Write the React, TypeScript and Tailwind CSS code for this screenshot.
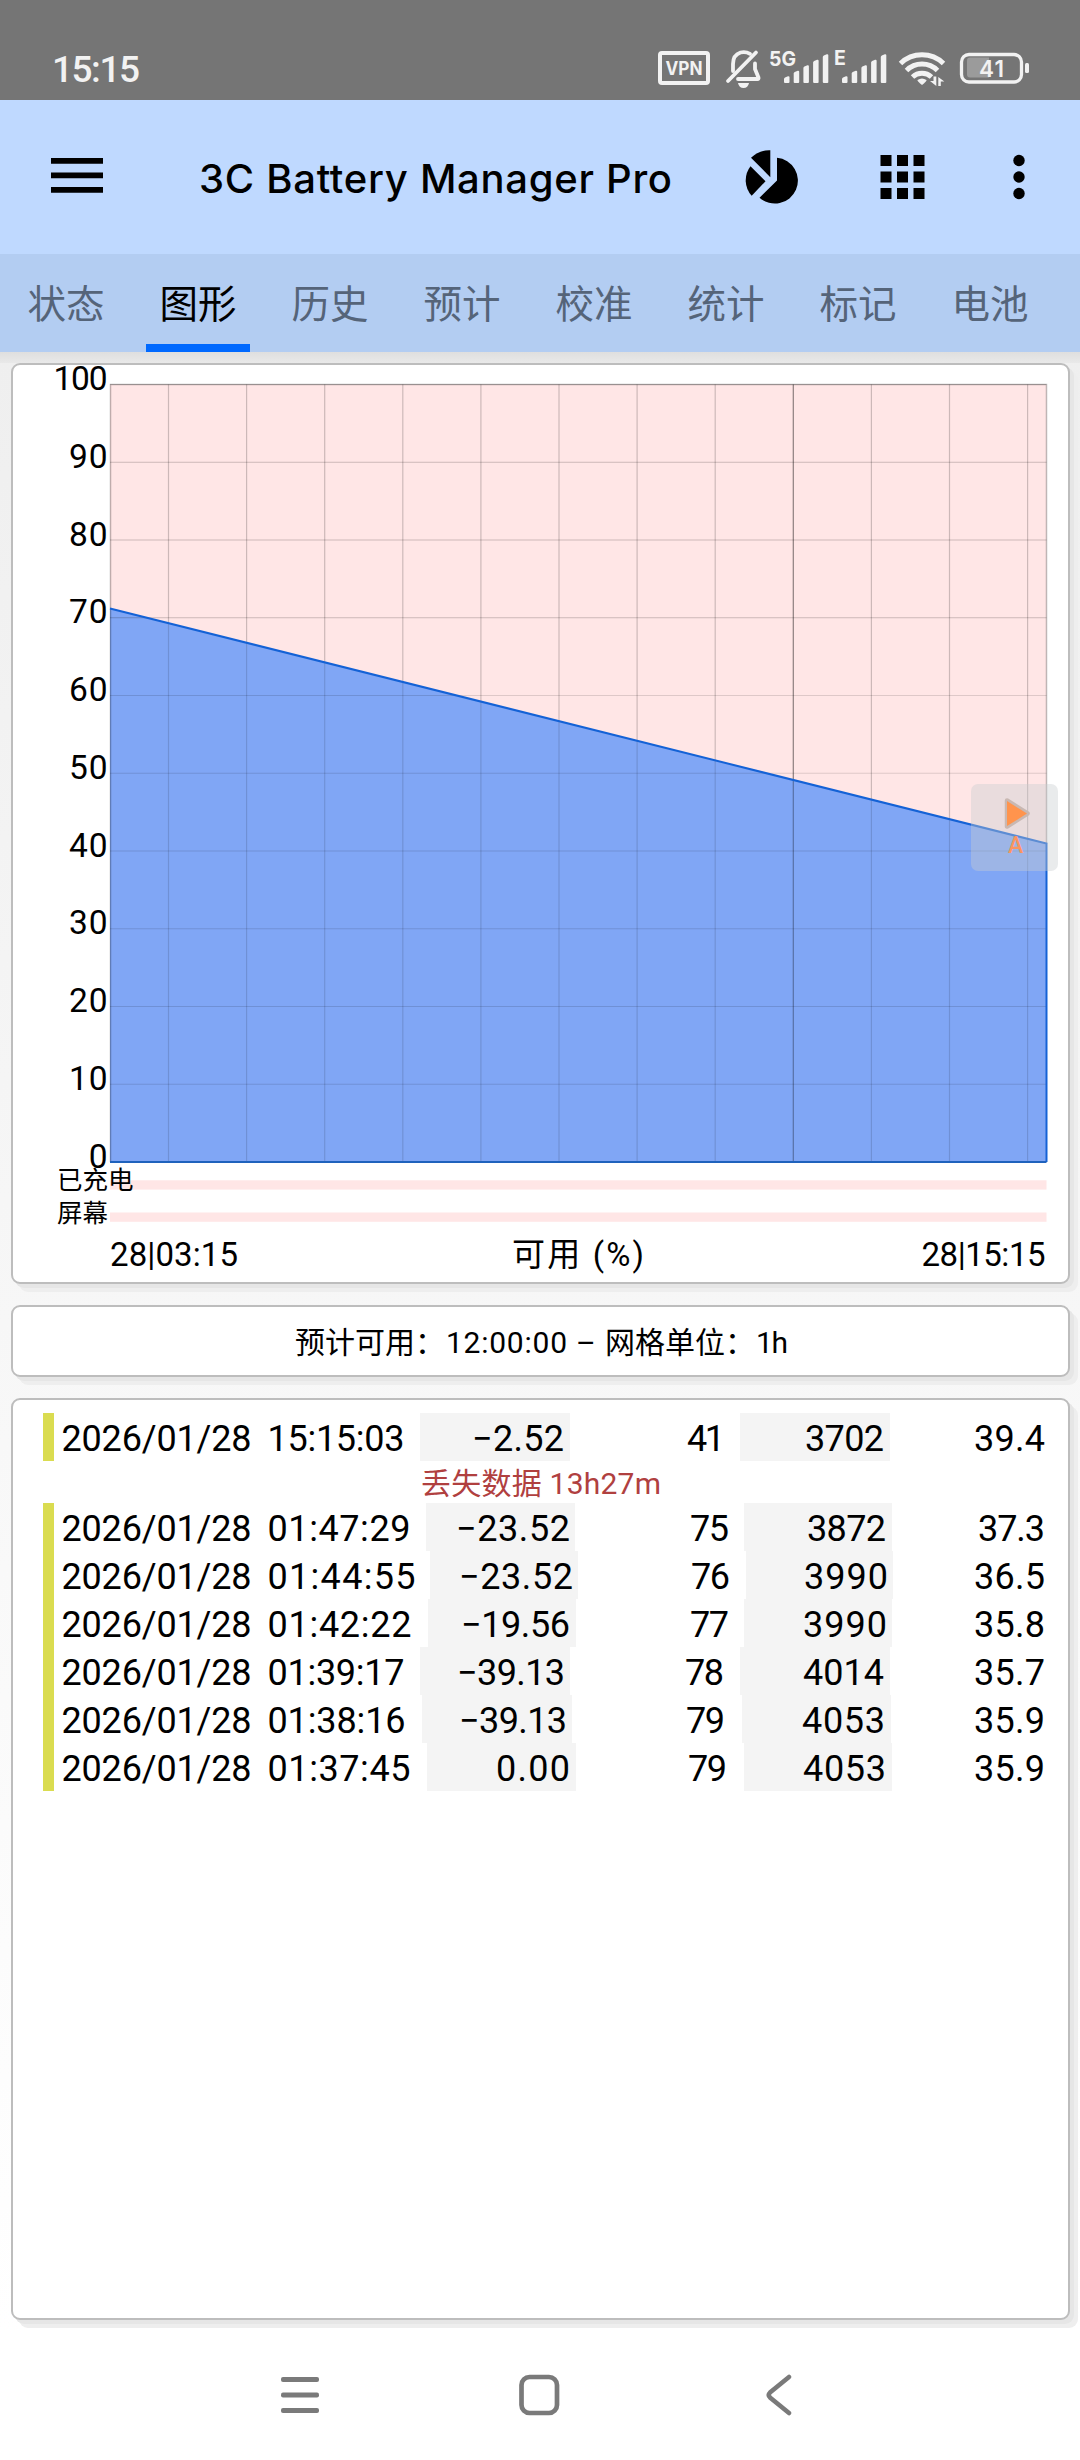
import { useLayoutEffect, useRef, type ReactNode } from "react";

const FONT = "font-[Roboto,'Noto_Sans_CJK_SC',sans-serif]";

/* Text whose tracking is spread so that it takes exactly `w` pixels. */
function Fit({ w, children, className = "" }: { w: number; children: string; className?: string }) {
  const ref = useRef<HTMLSpanElement>(null);
  useLayoutEffect(() => {
    const el = ref.current;
    if (!el) return;
    const apply = () => {
      el.style.letterSpacing = "0px";
      const natural = el.getBoundingClientRect().width;
      const gap = (w - natural) / (children.length - 1 || 1);
      el.style.letterSpacing = `${gap}px`;
      el.style.marginRight = `${-gap}px`;
    };
    apply();
    document.fonts?.ready.then(apply);
  }, [w, children]);
  return (
    <span ref={ref} className={`inline-block whitespace-pre ${className}`}>
      {children}
    </span>
  );
}

function Signal({ x }: { x: number }) {
  return (
    <g fill="#f2f2f2">
      {[0, 1, 2, 3, 4].map((i) => {
        const top = [76, 70.5, 65, 59.5, 54][i];
        const bx = x + i * 9.7;
        return <path key={i} d={`M${bx} ${top + 3}q0-1 1-1.500l3-1.300q1.500-.3 1.500 1V82q0 1-1 1h-3.500q-1 0-1-1z`} />;
      })}
    </g>
  );
}

function StatusBar() {
  return (
    <header className="flex h-[100px] items-end justify-between bg-[#757575] pl-[52px] pr-[50px] text-[#f2f2f2]">
      <div className="h-[40px] text-[37px] font-medium leading-[40px] mb-[10px]">
        <Fit w={88}>15:15</Fit>
      </div>
      <svg className="h-[60px] w-[374px]" viewBox="656 40 374 60" fontFamily="Inter, sans-serif">
        <rect x="660" y="53" width="48" height="30" rx="2" fill="none" stroke="#f2f2f2" strokeWidth="4" />
        <text x="665.500" y="75" fontSize="19" fontWeight="700" fill="#f2f2f2" textLength="37" lengthAdjust="spacingAndGlyphs">VPN</text>
        <g fill="none" stroke="#f2f2f2" strokeWidth="3.800" strokeLinecap="round">
          <path d="M728 81L756 52.500" />
          <path d="M733 71V64q0-9 7.500-11.500q5-1.300 9.500 1.300" />
          <path d="M755 63.500V69l3.500 8.500q.3 1.500-1 1.500H738" />
        </g>
        <path d="M738 83h11q-1 5-5.500 5t-5.500-5z" fill="#f2f2f2" />
        <text x="769" y="66" fontSize="20" fontWeight="700" fill="#f2f2f2" textLength="27" lengthAdjust="spacingAndGlyphs">5G</text>
        <Signal x={784} />
        <text x="834" y="65" fontSize="19.500" fontWeight="700" fill="#f2f2f2">E</text>
        <Signal x={842} />
        <g fill="none" stroke="#f2f2f2" strokeWidth="5">
          <path d="M900.500 63.500a31 31 0 0 1 43 0" />
          <path d="M906.500 70.500a22 22 0 0 1 31 0" />
          <path d="M912.500 77a14 14 0 0 1 19 0" />
        </g>
        <path d="M917.500 80q4.500-3 9 0q.5 1-4.500 5q-5-4-4.500-5z" fill="#f2f2f2" />
        <path d="M930 81h3.500v-4.500h2.800V86zM938.300 77l6 4.500h-3.500V86h-2.500z" fill="#f2f2f2" />
        <rect x="961.500" y="54.500" width="60" height="27.500" rx="7.500" fill="none" stroke="#f2f2f2" strokeWidth="3.300" />
        <path d="M967 60.500q0-3 3-3h19v20h-19q-3 0-3-3z" fill="#9b9b9b" />
        <text x="979" y="77" fontSize="22.500" fontWeight="600" fill="#f2f2f2" textLength="25">41</text>
        <rect x="1025" y="63" width="4" height="10" rx="1.500" fill="#f2f2f2" />
      </svg>
    </header>
  );
}

function AppBar() {
  return (
    <div className="flex h-[154px] items-start bg-[#bfd9ff] text-black">
      <svg className="mt-[58px] ml-[51px] h-[35px] w-[52px]" viewBox="0 0 52 35">
        <path d="M0 0h52v5.700H0zM0 14.500h52v5.700H0zM0 29h52v5.700H0z" />
      </svg>
      <h1 className="ml-[96px] mt-[51px] w-[544px] text-[40px] font-medium leading-[56px] font-[Inter,sans-serif]">
        <Fit w={473}>3C Battery Manager Pro</Fit>
      </h1>
      <svg className="mt-[50px] h-[54px] w-[55px]" viewBox="743.500 150 55 54">
        <path d="M777.500 157.700a23 23 0 1 1-17.500 40l17.500-17.200z" />
        <path d="M770.800 150.200v27l-19.300-19.500q8.500-8 19.300-7.500z" />
        <path d="M751 166.200l15 15-13.800 14.500a23 23 0 0 1-1.200-29.500z" />
      </svg>
      <svg className="ml-[82px] mt-[55px] h-[44px] w-[45px]" viewBox="0 0 45 44">
        {[0, 16.500, 33].map((y) =>
          [0.5, 17, 33.500].map((x) => <rect key={`${x}-${y}`} x={x} y={y} width="11" height="11" />),
        )}
      </svg>
      <svg className="ml-[87.500px] mt-[54px] h-[46px] w-[12px]" viewBox="0 0 12 46">
        <circle cx="6" cy="6.500" r="5.700" />
        <circle cx="6" cy="23" r="5.700" />
        <circle cx="6" cy="39.500" r="5.700" />
      </svg>
    </div>
  );
}

const TABS = ["状态", "图形", "历史", "预计", "校准", "统计", "标记", "电池"];

function Tabs() {
  return (
    <nav className="flex h-[98px] bg-[#b3cdf2]">
      {TABS.map((t, i) => (
        <div key={t} className={`flex w-[132px] flex-col items-center ${i === 1 ? "text-black" : "text-[#556479]"}`}>
          <span className="h-[90px] text-[38.500px] leading-[101px]">{t}</span>
          {i === 1 && <span className="h-2 w-[104px] bg-[#0069ff]" />}
        </div>
      ))}
    </nav>
  );
}

function Card({ children, className = "" }: { children: ReactNode; className?: string }) {
  return (
    <section
      className={`ml-[11px] w-[1059px] shrink-0 rounded-[9px] border-2 border-[#bdbdbd] bg-white shadow-[4px_4px_0_#e6e6e6,8px_8px_0_#eeeeee] ${className}`}
    >
      {children}
    </section>
  );
}

const LEFT = 110;
const RIGHT = 1046.5;
const TOP = 384.5;
const BOTTOM = 1162;

function Chart() {
  const rows = Array.from({ length: 11 }, (_, i) => TOP + (i * (BOTTOM - TOP)) / 10);
  const cols = Array.from({ length: 12 }, (_, i) => 168.5 + i * 78.1);
  return (
    <svg className="block h-[917px] w-[1055px] overflow-visible" viewBox="13 365 1055 917" fontFamily="Roboto, 'Noto Sans CJK SC', sans-serif">
      <rect x={LEFT} y={TOP} width={RIGHT - LEFT} height={BOTTOM - TOP} fill="#ffe6e6" />
      <path d={`M${LEFT} 608.500L${RIGHT} 843.500V${BOTTOM}H${LEFT}z`} fill="#80a6f5" />
      <g stroke="#000" strokeOpacity=".2" strokeWidth="1.200">
        {rows.slice(0, 10).map((y) => (
          <path key={y} d={`M${LEFT} ${y}H${RIGHT}`} strokeOpacity={y > 620 ? 0.13 : 0.2} />
        ))}
        {cols.map((x, i) => (
          <g key={x}>
            <path d={`M${x} ${TOP}V${608.5 + (x - LEFT) * 0.251}`} strokeOpacity={i === 8 ? 0.45 : 0.2} />
            <path d={`M${x} ${608.5 + (x - LEFT) * 0.251}V${BOTTOM}`} strokeOpacity={i === 8 ? 0.33 : 0.13} />
          </g>
        ))}
      </g>
      <path d={`M${LEFT + 0.5} ${BOTTOM}V${TOP}H${RIGHT}V844`} fill="none" stroke="#000" strokeOpacity=".25" strokeWidth="1.500" />
      <path d={`M${LEFT} 608.500L${RIGHT} 843.500V${BOTTOM}`} fill="none" stroke="#1462d6" strokeWidth="2" />
      <path d={`M${LEFT} ${BOTTOM}H${RIGHT}`} stroke="#1f62bd" strokeWidth="2" />
      <g fontSize="33.500" textAnchor="end">
        {rows.map((y, i) => {
          const v = String(100 - i * 10);
          const len = [0, 19, 38.5, 54][v.length];
          return (
            <text key={v} x="107.500" y={y + 5.5} textLength={len}>
              {v}
            </text>
          );
        })}
      </g>
      <g fill="#ffe6e6">
        <rect x={LEFT} y="1180.300" width={RIGHT - LEFT} height="9.300" />
        <rect x={LEFT} y="1212.500" width={RIGHT - LEFT} height="9.300" />
      </g>
      <g fontSize="25.500">
        <text x="57" y="1189">已充电</text>
        <text x="57" y="1222">屏幕</text>
      </g>
      <g fontSize="33">
        <text x="110" y="1265.700" textLength="128">28|03:15</text>
        <text x="512" y="1265.700" textLength="132">可用 (%)</text>
        <text x="921.500" y="1265.700" textLength="124">28|15:15</text>
      </g>
    </svg>
  );
}

function FloatingMarker() {
  return (
    <div className="absolute left-[971px] top-[432px] h-[87px] w-[87px] rounded-[7px] bg-[#c9ccd0]/40">
      <svg className="h-[87px] w-[87px]" viewBox="971 784 87 87">
        <path d="M1007 800.500L1027.500 813.500L1007 826.500z" fill="#ff944d" stroke="#c9b8b2" strokeWidth="4.500" strokeLinejoin="round" />
        <path d="M1007 801L1027 813.500L1007 826z" fill="#ff944d" />
        <text x="1008" y="853" fontSize="23" fontWeight="500" fill="#fb9560" fontFamily="Roboto, sans-serif">A</text>
      </svg>
    </div>
  );
}

interface Row {
  time: string;
  timeW: number;
  a: string;
  aW: number;
  pct: string;
  mv: string;
  mvW: number;
  temp: string;
  x: [number, number, number, number];
  r: [number, number, number];
}

/* x: edges of the two shaded cells; r: right edges of the first three values */
const ROWS: Row[] = [
  { time: "15:15:03", timeW: 137, a: "−2.52", aW: 92, pct: "41", mv: "3702", mvW: 79, temp: "39.4", x: [420, 570, 740, 890], r: [564, 725, 884] },
  { time: "01:47:29", timeW: 143, a: "−23.52", aW: 114, pct: "75", mv: "3872", mvW: 79, temp: "37.3", x: [426, 575, 744, 892], r: [570, 729, 886] },
  { time: "01:44:55", timeW: 148, a: "−23.52", aW: 114, pct: "76", mv: "3990", mvW: 84, temp: "36.5", x: [430, 578, 746, 893], r: [573, 730, 888] },
  { time: "01:42:22", timeW: 144, a: "−19.56", aW: 109, pct: "77", mv: "3990", mvW: 84, temp: "35.8", x: [428, 576, 744, 892], r: [570, 729, 887] },
  { time: "01:39:17", timeW: 137, a: "−39.13", aW: 108, pct: "78", mv: "4014", mvW: 81, temp: "35.7", x: [420, 570, 740, 890], r: [565, 724, 884] },
  { time: "01:38:16", timeW: 138, a: "−39.13", aW: 108, pct: "79", mv: "4053", mvW: 83, temp: "35.9", x: [422, 572, 742, 891], r: [567, 725, 885] },
  { time: "01:37:45", timeW: 143, a: "0.00", aW: 74, pct: "79", mv: "4053", mvW: 83, temp: "35.9", x: [427, 576, 744, 892], r: [570, 727, 886] },
];

function DataRow({ row }: { row: Row }) {
  const [a0, a1, b0, b1] = row.x;
  const cell = "flex h-[48px] shrink-0 justify-end";
  return (
    <div className="flex h-[48px] pl-[30px] text-[36px] leading-[53px] text-black">
      <div className="h-[48px] w-[11px] shrink-0 bg-[#dadc50]" />
      <div className="flex shrink-0 pl-[7.500px]" style={{ width: a0 - 54 }}>
        <div className="w-[206px] shrink-0">
          <Fit w={190}>2026/01/28</Fit>
        </div>
        <Fit w={row.timeW}>{row.time}</Fit>
      </div>
      <div className={`${cell} bg-[#f4f4f4]`} style={{ width: a1 - a0, paddingRight: a1 - row.r[0] }}>
        <Fit w={row.aW}>{row.a}</Fit>
      </div>
      <div className={cell} style={{ width: b0 - a1, paddingRight: b0 - row.r[1] }}>
        <Fit w={row.pct === "41" ? 38 : 39}>{row.pct}</Fit>
      </div>
      <div className={`${cell} bg-[#f4f4f4]`} style={{ width: b1 - b0, paddingRight: b1 - row.r[2] }}>
        <Fit w={row.mvW}>{row.mv}</Fit>
      </div>
      <div className={cell} style={{ width: 1045 - b1 }}>
        <Fit w={row.temp === "37.3" ? 67 : 71}>{row.temp}</Fit>
      </div>
    </div>
  );
}

function NavBar() {
  return (
    <footer className="flex h-[132px] items-start bg-white pt-[46px]">
      <svg className="ml-[281px] h-[42px] w-[38px]" viewBox="281 2374 38 42">
        <g fill="#7a7a7a">
          <rect x="281" y="2377" width="38" height="5" rx="2" />
          <rect x="281" y="2392.500" width="38" height="5" rx="2" />
          <rect x="281" y="2408" width="38" height="5" rx="2" />
        </g>
      </svg>
      <svg className="ml-[199px] h-[42px] w-[42px]" viewBox="518 2374 42 42">
        <rect x="521.500" y="2377" width="35.500" height="36" rx="8" fill="none" stroke="#7a7a7a" strokeWidth="4.700" />
      </svg>
      <svg className="ml-[204px] h-[42px] w-[30px]" viewBox="764 2374 30 42">
        <path d="M789 2377L770 2392.500Q767.500 2395 770 2397.500L789 2413" fill="none" stroke="#7a7a7a" strokeWidth="4.500" strokeLinecap="round" />
      </svg>
    </footer>
  );
}

export default function App() {
  return (
    <div className={`flex h-[2460px] w-[1080px] flex-col overflow-hidden bg-white ${FONT}`}>
      <StatusBar />
      <AppBar />
      <Tabs />
      <main className="relative flex h-[1976px] flex-col overflow-hidden bg-linear-to-b from-[#efefef] via-[#f8f8f8] via-55% to-white">
        <div className="h-[11px] shrink-0 bg-linear-to-b from-[#dfdfdf] to-[#e9e9e9]" />
        <Card className="h-[921px]">
          <Chart />
        </Card>
        <Card className="mt-[21px] flex h-[72px] pl-[282px] text-[30px] leading-[72px] text-black">
          <span className="w-[151px] shrink-0">预计可用：</span>
          <span className="w-[130px] shrink-0">
            <Fit w={121}>12:00:00</Fit>
          </span>
          <span className="w-[29px] shrink-0">–</span>
          <span className="w-[151px] shrink-0">网格单位：</span>
          <Fit w={32}>1h</Fit>
        </Card>
        <Card className="mt-[21px] h-[922px] pt-[13px]">
          <DataRow row={ROWS[0]} />
          <div className="h-[42px] pl-[408px] text-[30px] leading-[46px] text-[#b0403f]">
            <Fit w={240}>丢失数据 13h27m</Fit>
          </div>
          {ROWS.slice(1).map((r) => (
            <DataRow key={r.time} row={r} />
          ))}
        </Card>
        <FloatingMarker />
      </main>
      <NavBar />
    </div>
  );
}
